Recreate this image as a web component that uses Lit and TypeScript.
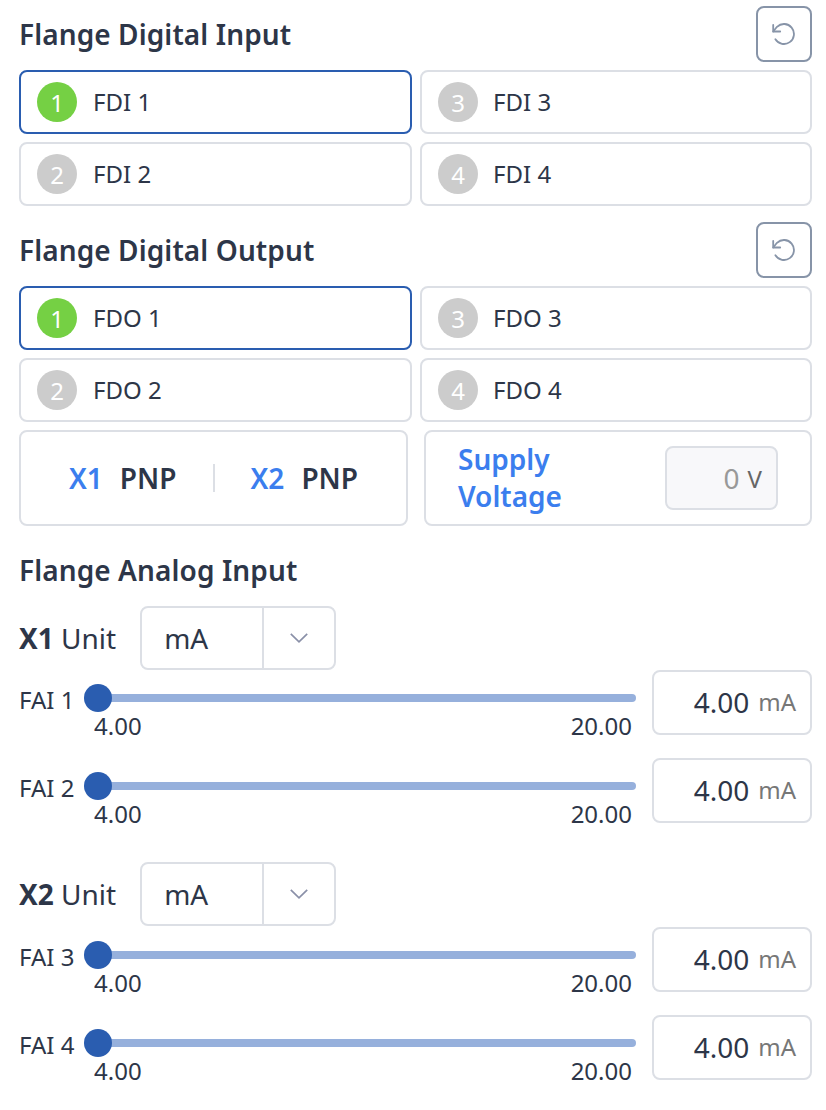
import { LitElement, html, css } from "lit";
import { customElement } from "lit/decorators.js";

const resetIcon = html`<svg width="24" height="24" viewBox="0 0 24 24" fill="none" stroke="currentColor" stroke-width="1.8" stroke-linecap="round" stroke-linejoin="round"><path d="M3.4 17.2A10 10 0 1 0 5 4.8L1.2 9.5"/><path d="M1.2 3v6.5h7"/></svg>`;
const chevron = html`<svg width="18" height="10" viewBox="0 0 18 10" fill="none" stroke="currentColor" stroke-width="1.7"><path d="M.8.8l8.2 8 8.2-8"/></svg>`;

@customElement("app-root")
export class AppRoot extends LitElement {
  static styles = css`
    :host { display: block; box-sizing: border-box; width: 826px; height: 1110px; padding: 6px 14px 0 19px; background: #fff; font-family: "Noto Sans", sans-serif; color: #2d3648; overflow: hidden; }
    * { box-sizing: border-box; }
    .head { display: flex; align-items: center; justify-content: space-between; height: 56px; margin-bottom: 8px; }
    .title { font-size: 28px; font-weight: 600; line-height: 38px; letter-spacing: 0.1px; }
    .reset { width: 56px; height: 56px; border: 2px solid #8794a8; border-radius: 8px; background: #fff; color: #8794a8; display: flex; align-items: center; justify-content: center; padding: 0; }
    .grid { display: grid; grid-template-columns: 393px 392px; gap: 8px; margin-bottom: 16px; }
    .grid.tight { margin-bottom: 8px; }
    .chan { height: 64px; border: 2px solid #dcdfe5; border-radius: 8px; display: flex; align-items: center; padding: 0 0 2px 16px; gap: 16px; font-size: 24px; }
    .chan:nth-child(even) { gap: 15px; }
    .chan.sel { border-color: #2a5db0; }
    .dot { width: 40px; height: 40px; margin-bottom: -2px; border-radius: 50%; background: #cccccc; color: #fff; display: flex; align-items: center; justify-content: center; font-size: 24px; }
    .dot.on { background: #75d044; }
    .boxes { display: grid; grid-template-columns: 389px 388px; gap: 16px; height: 96px; }
    .box { border: 2px solid #dcdfe5; border-radius: 8px; display: flex; align-items: center; }
    .pnp { justify-content: center; gap: 36px; font-size: 28px; font-weight: 600; }
    .pnp .pair { display: flex; gap: 17px; }
    .blue { color: #3b7eee; }
    .sep { width: 2px; height: 28px; background: #dcdfe5; }
    .supply { justify-content: space-between; padding: 0 32px; }
    .supply .lbl { font-size: 28px; font-weight: 600; line-height: 37px; }
    .ro { width: 113px; height: 64px; border: 2px solid #dcdfe5; border-radius: 8px; background: #f8f8fa; display: flex; align-items: center; justify-content: flex-end; gap: 8px; padding-right: 14px; font-size: 28px; color: #999; }
    .ro span { font-size: 24px; color: #666; }
    .atitle { height: 48px; display: flex; align-items: center; margin: 20px 0 12px; }
    .unit { display: flex; align-items: center; gap: 24px; height: 64px; font-size: 28px; }
    .unit b { font-weight: 700; }
    .select { width: 196px; height: 64px; border: 2px solid #dcdfe5; border-radius: 8px; display: flex; align-items: center; }
    .select .v { width: 122px; padding-left: 22px; border-right: 2px solid #dcdfe5; height: 100%; display: flex; align-items: center; }
    .select .c { flex: 1; display: flex; justify-content: center; color: #8a90a8; }
    .row { display: flex; height: 65px; margin-bottom: 23px; }
    .group { margin-bottom: 39px; }
    .group + .group .unit + .row { margin-top: 1px; }
    .group .row:last-child { margin-bottom: 0; }
    .name { width: 65px; font-size: 24px; padding: 14px 0 0; white-space: nowrap; line-height: 32px; }
    .slider { width: 552px; position: relative; }
    .track { position: absolute; left: 14px; right: 0; top: 24px; height: 8px; background: #96b0dc; border-radius: 0 4px 4px 0; }
    .thumb { position: absolute; left: 0; top: 14px; width: 28px; height: 28px; border-radius: 50%; background: #2a5db0; }
    .ends { position: absolute; left: 10px; right: 4px; top: 40px; display: flex; justify-content: space-between; font-size: 24px; line-height: 32px; }
    .input { margin-left: 16px; width: 160px; border: 2px solid #dcdfe5; border-radius: 8px; display: flex; align-items: center; justify-content: flex-end; gap: 9px; padding: 0 14px 2px 0; font-size: 28px; }
    .input span { font-size: 24px; color: #777; }
  `;

  private chans(p: string, tight = false) {
    const order = [1, 3, 2, 4];
    return html`<div class="grid ${tight ? "tight" : ""}">${order.map((n) => html`
      <div class="chan ${n === 1 ? "sel" : ""}"><div class="dot ${n === 1 ? "on" : ""}">${n}</div>${p} ${n}</div>`)}</div>`;
  }

  private head(t: string) {
    return html`<div class="head"><div class="title">${t}</div><button class="reset">${resetIcon}</button></div>`;
  }

  private group(x: string, a: number, b: number) {
    return html`<div class="group">
      <div class="unit"><div><b>${x}</b> Unit</div><div class="select"><div class="v">mA</div><div class="c">${chevron}</div></div></div>
      ${[a, b].map((n) => html`<div class="row">
        <div class="name">FAI ${n}</div>
        <div class="slider"><div class="track"></div><div class="thumb"></div><div class="ends"><span>4.00</span><span>20.00</span></div></div>
        <div class="input">4.00 <span>mA</span></div>
      </div>`)}
    </div>`;
  }

  render() {
    return html`
      ${this.head("Flange Digital Input")}
      ${this.chans("FDI")}
      ${this.head("Flange Digital Output")}
      ${this.chans("FDO", true)}
      <div class="boxes">
        <div class="box pnp">
          <div class="pair"><span class="blue">X1</span><span>PNP</span></div>
          <div class="sep"></div>
          <div class="pair"><span class="blue">X2</span><span>PNP</span></div>
        </div>
        <div class="box supply">
          <div class="lbl blue">Supply<br />Voltage</div>
          <div class="ro">0 <span>V</span></div>
        </div>
      </div>
      <div class="atitle title">Flange Analog Input</div>
      ${this.group("X1", 1, 2)}
      ${this.group("X2", 3, 4)}
    `;
  }
}
